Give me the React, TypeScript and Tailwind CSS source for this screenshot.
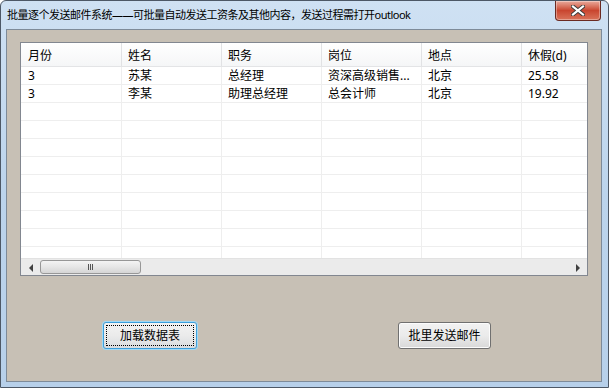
import React from 'react';

const FONT = '"Segoe UI", "Noto Sans", "Noto Sans CJK SC", sans-serif';

const columns = ['月份', '姓名', '职务', '岗位', '地点', '休假(d)'];

const rows: string[][] = [
  ['3', '苏某', '总经理', '资深高级销售...', '北京', '25.58'],
  ['3', '李某', '助理总经理', '总会计师', '北京', '19.92'],
];

const EMPTY_ROWS = 9;

const CloseButton: React.FC = () => (
  <div className="absolute right-[7px] top-0 w-[46px] h-[20px] rounded-b-[4px] border border-t-0 border-[#6b2a22] bg-gradient-to-b from-[#e8a99c] via-[#c9452f] to-[#d9725a] flex items-center justify-center shadow-[inset_0_0_0_1px_rgba(255,255,255,0.35)]">
    <svg width="14" height="11" viewBox="0 0 14 11">
      <path d="M2 1.5 L12 9.5 M12 1.5 L2 9.5" stroke="#3a3a3a" strokeWidth="4" strokeLinecap="square" />
      <path d="M2 1.5 L12 9.5 M12 1.5 L2 9.5" stroke="#ffffff" strokeWidth="2.2" strokeLinecap="square" />
    </svg>
  </div>
);

const Cell: React.FC<{ text: string; first?: boolean }> = ({ text, first }) => (
  <div className={`${first ? 'w-[101px] pl-[7px]' : 'w-[100px] pl-[6px]'} shrink-0 h-full border-r border-[#eeeeee] pr-[2px] flex items-center whitespace-nowrap`}>
    {text}
  </div>
);

const ScrollBar: React.FC = () => (
  <div className="h-[17px] bg-[#ebebeb] border-t border-[#e2e2e2] flex items-center relative shrink-0">
    <svg className="absolute left-[8px] top-[5px]" width="5" height="8" viewBox="0 0 5 8">
      <path d="M4 0 L0 4 L4 8 Z" fill="#404040" />
    </svg>
    <div className="absolute left-[19px] top-[1px] w-[101px] h-[14px] rounded-[3px] border border-[#979797] bg-gradient-to-b from-[#f4f4f4] via-[#e6e6e6] to-[#d5d5d5] flex items-center justify-center gap-[1px]">
      <span className="w-[1px] h-[6px] bg-[#555]" />
      <span className="w-[1px] h-[6px] bg-[#555]" />
      <span className="w-[1px] h-[6px] bg-[#555]" />
    </div>
    <svg className="absolute right-[7px] top-[5px]" width="5" height="8" viewBox="0 0 5 8">
      <path d="M1 0 L5 4 L1 8 Z" fill="#404040" />
    </svg>
  </div>
);

const ListView: React.FC = () => (
  <div className="ml-[13px] mt-[12px] w-[568px] h-[234px] border border-[#828790] bg-white flex flex-col overflow-hidden text-[12px] text-black">
    <div className="h-[24px] shrink-0 flex bg-gradient-to-b from-white to-[#f5f6f7] border-b border-[#e3e4e6]">
      {columns.map((c, i) => (
        <div key={c} className={`${i === 0 ? 'w-[101px] pl-[7px]' : 'w-[100px] pl-[6px]'} shrink-0 h-full border-r border-[#e1e2e4] flex items-center pt-[3px]`}>
          {c}
        </div>
      ))}
    </div>
    <div className="flex-1 overflow-hidden">
      {rows.map((r, i) => (
        <div key={i} className="h-[18px] flex border-b border-[#eeeeee]">
          {r.map((t, j) => (
            <Cell key={j} text={t} first={j === 0} />
          ))}
        </div>
      ))}
      {Array.from({ length: EMPTY_ROWS }).map((_, i) => (
        <div key={`e${i}`} className="h-[18px] flex border-b border-[#eeeeee]">
          {columns.map((c, j) => (
            <Cell key={c} text="" first={j === 0} />
          ))}
        </div>
      ))}
    </div>
    <ScrollBar />
  </div>
);

const App: React.FC = () => {
  return (
    <div className="w-[609px] h-[388px] overflow-hidden bg-white" style={{ fontFamily: FONT }}>
      <div className="relative w-[609px] h-[388px] rounded-t-[6px] border border-[#4d5866] bg-gradient-to-b from-[#cfe1f3] via-[#bcd4ec] to-[#b7d0ea] flex flex-col">
        <div className="h-[28px] shrink-0 flex items-center pl-[6px] text-[11px] tracking-[-0.5px] text-black">
          批量逐个发送邮件系统——可批量自动发送工资条及其他内容，发送过程需打开outlook
        </div>
        <CloseButton />
        <div className="ml-[5px] mr-[6px] h-[353px] border border-[#7e8b99] bg-[#c7c0b5] flex flex-col">
          <ListView />
          <div className="flex mt-[46px] text-[12px] text-black">
            <button className="ml-[96px] w-[94px] h-[27px] rounded-[3px] border border-[#3c9fdc] shadow-[0_0_0_1px_#9fd8f5] bg-gradient-to-b from-[#f3f3f3] via-[#ebebeb] to-[#d9dcdf] p-[2px]">
              <div className="w-full h-full border border-dotted border-black flex items-center justify-center">加载数据表</div>
            </button>
            <button className="ml-[201px] w-[93px] h-[27px] rounded-[3px] border border-[#707070] shadow-[inset_0_0_0_1px_#fcfcfc] bg-gradient-to-b from-[#f2f2f2] via-[#ebebeb] to-[#d8d8d8] flex items-center justify-center">
              批里发送邮件
            </button>
          </div>
        </div>
      </div>
    </div>
  );
};

export default App;
